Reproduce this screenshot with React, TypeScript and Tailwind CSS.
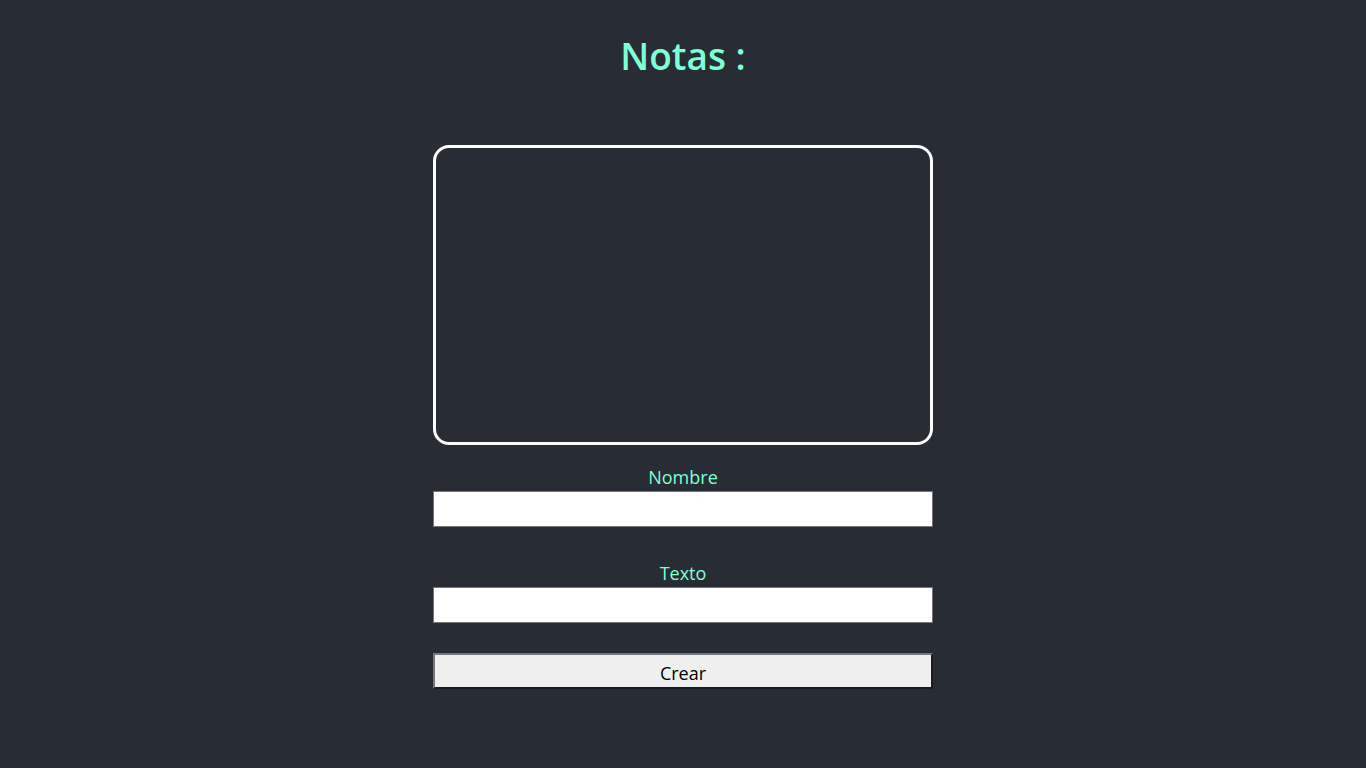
const App = () => {
  return (
    <main className="min-h-screen bg-[#282c34] flex flex-col items-center font-['Open_Sans',sans-serif]">
      {/* Title */}
      <h1 className="pt-[32px] text-[37px] leading-[48px] font-semibold text-[#7fffd4]">Notas :</h1>

      {/* Notes board */}
      <div className="mt-[65px] w-[500px] h-[300px] border-[3px] border-white rounded-[16px]" />

      {/* Form */}
      <form className="flex flex-col items-center w-[500px]" onSubmit={(e) => e.preventDefault()}>
        <label className="mt-[20px] text-[18px] leading-[24px] text-[#7fffd4]">Nombre</label>
        <input type="text" className="mt-[2px] w-full h-[36px] bg-white border border-[#767676]" />

        <label className="mt-[34px] text-[18px] leading-[24px] text-[#7fffd4]">Texto</label>
        <input type="text" className="mt-[2px] w-full h-[36px] bg-white border border-[#767676]" />

        <button
          type="submit"
          className="mt-[30px] w-full h-[36px] pt-[3px] bg-[#efefef] text-[18px] leading-[24px] text-black border-2 border-t-[#767676] border-l-[#767676] border-r-[#1b1b1b] border-b-[#1b1b1b]"
        >
          Crear
        </button>
      </form>
    </main>
  );
};

export default App;
